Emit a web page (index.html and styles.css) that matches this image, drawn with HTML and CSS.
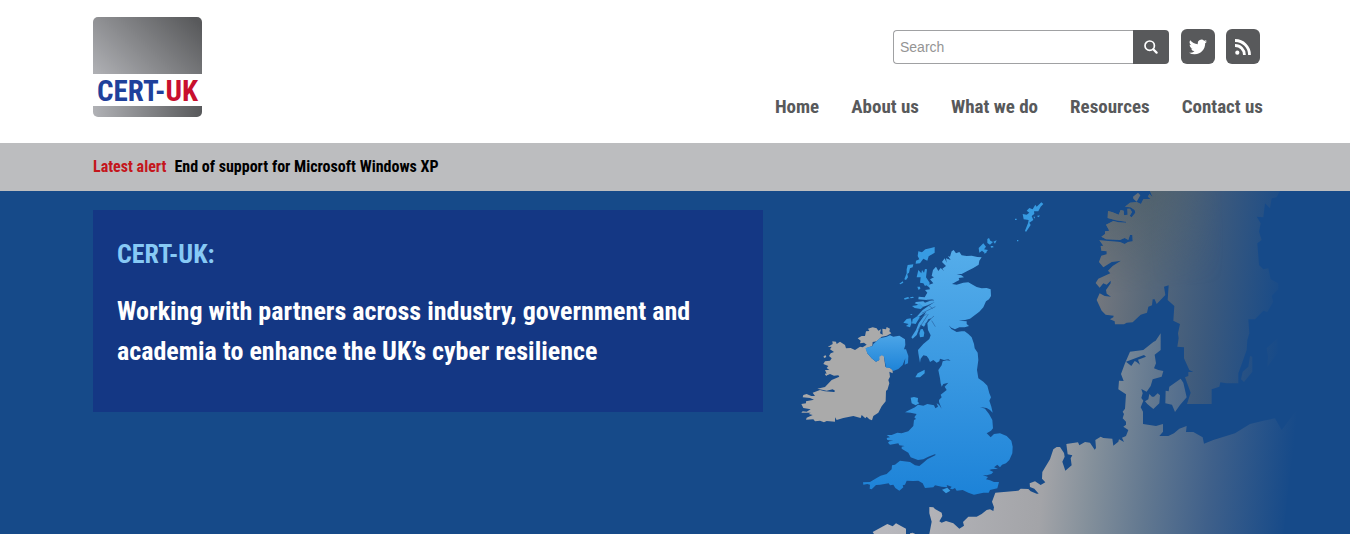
FILE: index.html
```html
<!DOCTYPE html>
<html lang="en">
<head>
    <meta charset="UTF-8">
    <meta name="viewport" content="width=device-width, initial-scale=1.0">
    <title>CERT-UK</title>
    <link rel="stylesheet" href="styles.css">
</head>
<body>
    <header class="container header">
        <a href="#" class="logo"><span class="logo-text">CERT-<span class="logo-uk">UK</span></span></a>

        <div class="header-right">
            <div class="tools">
                <form class="search">
                    <input type="text" placeholder="Search" aria-label="Search">
                    <button type="submit" aria-label="Search">
                        <svg width="14" height="14" viewBox="0 0 14 14" fill="none" stroke="#fff">
                            <circle cx="5.7" cy="5.7" r="4.7" stroke-width="1.7"/>
                            <path d="M9.2 9.2l3.4 3.4" stroke-width="2.2" stroke-linecap="round"/>
                        </svg>
                    </button>
                </form>
                <a href="#" class="social" aria-label="Twitter">
                    <svg width="18" height="18" viewBox="0 0 24 24" fill="#fff"><path d="M23.95 4.57a10 10 0 0 1-2.82.77 4.96 4.96 0 0 0 2.16-2.72c-.95.55-2 .95-3.13 1.18a4.92 4.92 0 0 0-8.38 4.48C7.69 8.1 4.07 6.13 1.64 3.16a4.93 4.93 0 0 0 1.52 6.57 4.9 4.9 0 0 1-2.23-.61v.06c0 2.38 1.7 4.37 3.95 4.82a5 5 0 0 1-2.21.09 4.94 4.94 0 0 0 4.6 3.42A9.87 9.87 0 0 1 0 19.54a13.94 13.94 0 0 0 7.55 2.21c9.05 0 14-7.5 14-13.99 0-.21 0-.42-.02-.63a9.94 9.94 0 0 0 2.42-2.56z"/></svg>
                </a>
                <a href="#" class="social" aria-label="RSS">
                    <svg width="16" height="16" viewBox="0 0 16 16" fill="none" stroke="#fff" stroke-width="2.8">
                        <circle cx="2.3" cy="13.7" r="2.1" fill="#fff" stroke="none"/>
                        <path d="M0 6.5A9.3 9.3 0 0 1 9.4 16M0 1.5A14.3 14.3 0 0 1 14.5 16"/>
                    </svg>
                </a>
            </div>
            <nav class="nav">
                <a href="#">Home</a>
                <a href="#">About us</a>
                <a href="#">What we do</a>
                <a href="#">Resources</a>
                <a href="#">Contact us</a>
            </nav>
        </div>
    </header>

    <div class="alert">
        <div class="container alert-inner">
            <span class="alert-label">Latest alert</span>
            <a href="#">End of support for Microsoft Windows XP</a>
        </div>
    </div>

    <main class="hero">
        <svg class="map" viewBox="0 3 1680 1029" aria-hidden="true">
            <defs>
                <linearGradient id="gb" x1="0" y1="0" x2="0" y2="1">
                    <stop offset="0" stop-color="#55adea"/>
                    <stop offset="1" stop-color="#1d83d8"/>
                </linearGradient>
                <linearGradient id="ni" x1="0" y1="0" x2="0" y2="1">
                    <stop offset="0" stop-color="#4ca5e7"/>
                    <stop offset="1" stop-color="#1d83d8"/>
                </linearGradient>
                <linearGradient id="europe" gradientUnits="userSpaceOnUse" x1="300" y1="900" x2="1490" y2="1010">
                    <stop offset="0" stop-color="#b8b8bd"/>
                    <stop offset=".38" stop-color="#a3a4a8"/>
                    <stop offset=".5" stop-color="#84909b"/>
                    <stop offset=".64" stop-color="#627890"/>
                    <stop offset=".8" stop-color="#3f608a"/>
                    <stop offset="1" stop-color="#164a89"/>
                </linearGradient>
                <linearGradient id="nordic" gradientUnits="userSpaceOnUse" x1="920" y1="340" x2="1480" y2="400">
                    <stop offset="0" stop-color="#73777e"/>
                    <stop offset=".25" stop-color="#59697a"/>
                    <stop offset=".6" stop-color="#3b597d"/>
                    <stop offset="1" stop-color="#164a89"/>
                </linearGradient>
                <linearGradient id="shade" gradientUnits="userSpaceOnUse" x1="1050" y1="0" x2="1080" y2="300">
                    <stop offset="0" stop-color="#4c5e68" stop-opacity=".7"/>
                    <stop offset="1" stop-color="#4c5e68" stop-opacity="0"/>
                </linearGradient>
                <linearGradient id="shade-fade" gradientUnits="userSpaceOnUse" x1="1080" y1="0" x2="1300" y2="0">
                    <stop offset="0" stop-color="#fff"/>
                    <stop offset="1" stop-color="#000"/>
                </linearGradient>
                <mask id="fade"><path fill="url(#shade-fade)" d="M900 0h600v400H900z"/></mask>
                <path id="norway" d="M1080 3L1088 22 1078 12 1074 20 1082 27 1060 28 1053 42 1040 36 1020 38 1005 50 1022 52 1034 60 1036 68 1025 82 1019 78 1026 66 1020 56 1012 56 1013 74 1002 76 1001 62 992 60 986 74 975 70 968 67 954 63 953 84 978 91 1008 95 1008 98 985 97 970 93 948 104 958 122 945 124 945 132 934 140 948 148 990 150 1004 144 1015 150 1020 135 1027 135 1028 154 1014 156 1004 162 990 156 928 151 940 167 932 168 934 182 950 184 950 193 934 197 927 216 940 232 965 216 993 212 968 228 954 242 961 250 925 266 917 279 929 293 940 280 950 284 962 272 962 280 948 300 950 311 963 320 944 318 929 310 920 330 935 362 947 374 971 377 970 382 960 388 974 394 975 403 1002 403 1010 398 1028 397 1052 374 1071 368 1075 350 1086 346 1088 328 1094 328 1100 342 1126 315 1122 290 1136 286 1133 330 1153 348 1150 392 1170 402 1164 430 1166 445 1162 470 1182 472 1182 505 1198 540 1210 546 1195 546 1195 558 1185 562 1202 608 1191 642 1265 642 1265 598 1288 590 1291 577 1310 580 1345 580 1345 550 1356 520 1370 480 1372 450 1378 430 1375 388 1395 388 1420 362 1432 366 1450 335 1445 318 1465 298 1465 280 1442 268 1435 235 1420 238 1407 225 1402 160 1415 150 1407 125 1412 100 1400 80 1420 82 1425 40 1440 55 1445 25 1460 22 1470 3z"/>
            </defs>

            <!-- Scandinavia -->
            <use href="#norway" fill="url(#nordic)"/>
            <use href="#norway" fill="url(#shade)" mask="url(#fade)"/>
            <path fill="url(#nordic)" d="M1029 20L1044 8 1051 16 1040 35 1030 26zM1380 498L1387 500 1387 545 1362 576 1353 568 1358 545 1375 530zM1430 475L1462 445 1463 490 1432 530 1434 500z"/>

            <!-- mainland Europe and Denmark -->
            <g fill="url(#europe)">
                <path d="M418 1032L425 995 418 970 418 951 430 952 435 957 455 968 457 978 448 994 455 998 468 993 490 1000 508 1016 522 1007 519 996 535 980 560 980 575 972 590 960 600 958 610 963 612 952 606 935 616 908 685 902 692 896 715 897 722 904 740 911 746 911 733 896 720 891 719 880 735 874 752 885 766 877 756 866 757 846 780 808 790 778 800 771 810 771 822 789 824 800 817 815 826 842 845 826 842 805 847 796 833 793 829 762 864 757 868 766 885 756 900 758 914 779 918 774 916 750 932 740 940 744 967 746 970 767 985 755 987 748 1002 756 996 743 1008 738 1015 720 1000 710 1008 704 1008 695 998 685 1002 672 998 665 1005 656 1008 613 985 598 987 572 1001 573 993 552 1005 520 1020 485 1060 480 1090 456 1097 452 1112 430 1112 480 1094 494 1098 520 1092 535 1105 540 1120 543 1115 560 1088 568 1082 588 1070 605 1054 597 1058 610 1054 624 1060 632 1052 652 1059 665 1059 702 1098 708 1119 702 1119 725 1108 738 1135 738 1152 730 1168 716 1190 708 1188 726 1210 726 1238 742 1242 761 1270 750 1335 730 1380 702 1420 692 1455 685 1475 720 1535 640 1500 850 1480 1032z"/>
                <path d="M248 1026L292 1002 308 1009 318 1000 348 1016 348 1032 252 1032zM360 1030L368 1028 376 1032H360zM1065 634L1075 628 1078 612 1086 620 1092 620 1103 610 1110 616 1108 640 1090 657 1072 642zM1127 602L1136 604 1138 590 1172 566 1180 578 1190 622 1170 645 1155 666 1146 644 1126 640z"/>
            </g>
            <path fill="#164a89" d="M1008 515L1062 495 1068 500 1044 509 1050 524 1040 516 1034 513 1024 528z"/>

            <!-- Ireland -->
            <path fill="#aaa" d="M203 445L215 438 225 438 228 424 238 423 234 416 248 412 260 415 265 422 273 418 270 430 278 434 277 416 288 418 290 411 300 416 298 424 304 430 290 437 275 440 260 454 248 456 247 468 228 475 232 490 245 505 258 515 268 510 274 496 282 500 286 530 299 533 308 540 308 550 298 545 300 560 295 570 298 580 292 600 288 602 287 634 275 649 265 668 250 678 246 691 238 688 230 680 226 685 215 675 212 684 190 678 160 684 140 690 135 682 135 695 110 693 102 697 90 692 75 694 70 688 48 689 50 683 68 675 56 672 62 668 34 668 38 664 50 665 62 658 40 654 34 642 48 640 48 634 72 629 60 624 38 622 40 615 50 612 64 618 75 618 68 608 90 600 105 604 132 606 136 603 128 598 110 602 82 596 105 591 125 570 148 560 145 556 132 557 120 552 112 556 105 540 118 540 110 534 115 528 100 522 105 514 120 512 125 505 117 498 122 490 132 486 120 478 125 470 113 471 128 462 127 454 138 455 140 462 150 455 165 465 168 475 182 474 195 480 210 470 218 472 230 464 222 458 210 460 212 452zM100 500l6-5 3 6-6 3zM107 550l5 3-2 5-5-4z"/>
            <path fill="url(#ni)" d="M226 474L248 468 250 462 270 445 290 440 300 436 310 440 328 437 345 448 346 465 342 478 348 478 355 498 354 520 344 524 346 505 338 525 325 537 310 543 300 533 288 533 282 500 274 496 268 510 258 515 245 505 232 490z"/>
            <path fill="#aaa" d="M268 500l8-4 6 4-1 12-12 2z"/>

            <!-- Great Britain -->
            <path fill="url(#gb)" d="M491 180L498 190 508 186 515 196 530 198 545 197 562 201 575 202 568 212 566 224 550 234 532 243 515 252 500 252 514 256 522 262 506 264 508 270 498 275 486 282 500 284 520 278 535 277 548 284 560 291 575 295 590 294 602 298 603 318 597 328 588 334 580 352 568 365 552 377 540 386 525 390 506 392 530 394 530 402 537 408 524 412 508 412 495 418 484 413 476 406 484 417 500 426 515 424 524 424 535 432 545 442 552 462 554 475 563 488 565 510 561 540 565 565 580 575 592 587 598 610 603 622 598 632 604 650 608 668 600 660 590 654 570 651 585 656 597 672 607 690 609 715 603 722 590 730 602 742 612 732 630 730 650 738 664 752 668 770 667 790 658 810 648 820 636 824 630 832 622 824 612 832 624 836 605 838 598 840 610 846 604 852 590 856 578 855 594 861 588 868 600 871 612 876 627 876 622 895 600 900 596 908 580 908 552 914 535 908 518 900 500 902 495 894 488 898 480 896 485 890 470 885 472 892 455 890 435 886 430 892 405 894 398 880 385 872 370 873 350 872 345 884 338 886 340 892 328 902 316 894 310 884 300 886 296 880 270 884 258 885 245 898 239 896 240 884 232 882 220 884 219 877 240 876 260 864 272 857 290 852 305 838 306 826 315 824 330 812 360 816 375 826 388 828 400 818 412 808 436 796 436 792 415 800 400 808 384 810 362 802 355 788 335 776 335 770 344 768 328 766 325 760 300 764 294 758 298 754 310 752 292 750 290 744 300 742 290 735 305 735 322 728 335 730 355 724 370 708 372 690 378 687 373 682 380 672 362 668 345 667 358 660 375 652 384 644 400 647 412 642 432 646 436 655 444 650 440 640 447 644 455 656 447 636 447 630 455 622 452 614 470 600 464 590 475 578 460 582 455 590 452 580 450 565 445 540 455 526 458 514 470 511 482 512 475 508 462 510 450 506 448 514 440 518 430 510 420 516 416 506 410 498 400 496 392 506 390 518 385 490 384 480 400 462 418 447 422 436 414 420 412 400 424 385 415 388 402 410 392 404 380 435 368 446 364 442 378 420 386 400 400 380 408 365 390 378 382 378 398 360 412 350 435 335 415 345 400 350 392 346 374 340 378 336 400 334 405 338 432 328 410 330 385 328 386 320 404 322 412 308 405 300 420 298 415 285 430 280 420 268 432 262 425 258 429 240 438 230 445 243 452 234 463 244 457 236 468 228 456 216 464 205 470 218 468 205 482 210 474 198 480 200 485 184z"/>
            <path fill="none" stroke="#2b65a5" stroke-width="2" d="M366 401L410 372M384 420L415 372M405 402L432 378M425 392L436 410M395 370L436 350M410 330L432 332M415 345L428 356"/>

            <!-- islands -->
            <g fill="#379be2">
                <path d="M434 171L434 188 416 199 412 212 400 206 390 220 377 221 378 212 388 208 383 198 385 184 396 187 406 178 420 175zM353 225L370 223 368 232 360 235 357 248 352 252 354 262 348 270 343 268 350 250 350 238zM328 281l10-7 2 4-9 5z"/>
                <path d="M385 240L394 250 396 240 402 248 405 237 411 238 408 262 419 278 417 292 409 286 405 288 400 280 390 278 392 262 380 262zM382 290l8 0 1 7-6 2zM342 325l12-4 5 4-15 4zM360 322l9-2 3 3-10 2zM366 348L380 346 388 340 400 350 392 357 374 354zM361 372l7 0-5 4z"/>
                <path d="M340 398L350 387 362 385 365 398 360 412 348 408 356 402zM368 388L384 377 390 380 377 402 366 400zM392 418L398 417 403 428 401 440 390 442 388 430zM376 562L383 550 404 539 404 550 390 562zM362 623L372 621 384 624 383 635 388 640 377 646 365 640zM456 899L472 893 481 902 468 910z"/>
                <path d="M566 174L580 160 588 170 582 178 594 180 585 190 576 182 568 188zM592 147l5-3 4 8 8 4-9 8-8-5zM610 155l10-4-5 10zM602 168l7 0 2 4-8 1zM585 182l6 4-8 6z"/>
                <path d="M754 37L760 42 752 50 745 64 732 64 733 72 725 78 730 90 718 98 722 105 708 126 705 122 714 100 716 90 701 88 698 72 710 74 718 68 710 62 718 54 728 58 736 44 740 50zM675 86h5v4h-5zM681 150h4v4h-4zM740 78l9-2-2 6zM730 80l5 0-1 6z"/>
            </g>
        </svg>

        <div class="container">
            <section class="intro">
                <h1>CERT-UK:</h1>
                <p>Working with partners across industry, government and academia to enhance the UK’s cyber resilience</p>
            </section>
        </div>
    </main>
</body>
</html>
```
FILE: styles.css
```css
*{
    box-sizing: border-box;
}
body{
    margin: 0;
    background-color: white;
    font-family: "Roboto Condensed", Roboto, "Liberation Sans", sans-serif;
    font-weight: bold;
}
a{
    color: inherit;
    text-decoration: none;
}
.container{
    max-width: 1176px;
    margin: 0 auto;
    padding-left: 6px;
}
.header{
    display: flex;
    justify-content: space-between;
    padding-top: 17px;
    padding-bottom: 23px;
}
.logo{
    width: 109px;
    height: 100px;
    padding-top: 57px;
    border-radius: 5px;
    background: linear-gradient(45deg, #b0b1b5, #58595b 95%) top / 100% 57px no-repeat,
                linear-gradient(90deg, #b0b1b5, #58595b) bottom / 100% 11px no-repeat;
}
.logo-text{
    display: block;
    height: 32px;
    line-height: 34px;
    font-size: 29px;
    text-align: center;
    white-space: nowrap;
    color: #1f419b;
    background-color: white;
}
.logo-uk{
    color: #c8102e;
}
.header-right{
    display: flex;
    flex-direction: column;
    align-items: flex-end;
    padding-top: 12px;
}
.tools{
    display: flex;
    align-items: center;
    margin-right: 3px;
}
.search{
    display: flex;
    margin-right: 1px;
}
.search input{
    width: 240px;
    height: 34px;
    padding: 0 6px;
    border: 1px solid #a0a1a3;
    border-right: 0;
    border-radius: 4px 0 0 4px;
    font-family: "Liberation Sans", Arial, sans-serif;
    font-size: 14px;
}
.search input::placeholder{
    color: #949494;
}
.search button{
    display: flex;
    align-items: center;
    justify-content: center;
    width: 36px;
    height: 34px;
    padding: 0;
    border: 0;
    border-radius: 0 4px 4px 0;
    background-color: #58595b;
}
.social{
    display: flex;
    align-items: center;
    justify-content: center;
    width: 34px;
    height: 35px;
    margin-left: 11px;
    border-radius: 6px;
    background-color: #58595b;
}
.nav{
    display: flex;
    gap: 32px;
    margin-top: 30px;
    font-size: 19px;
    line-height: 26px;
    color: #58595b;
}
.alert{
    background-color: #bcbdbf;
}
.alert-inner{
    display: flex;
    gap: 8px;
    font-size: 16px;
    line-height: 48px;
    color: black;
}
.alert-label{
    color: #c4161c;
}
.hero{
    position: relative;
    min-height: 343px;
    padding-top: 19px;
    background-color: #164a89;
    overflow: hidden;
}
.map{
    position: absolute;
    top: 0;
    right: 0;
    width: 560px;
    height: 343px;
}
.intro{
    position: relative;
    max-width: 670px;
    min-height: 202px;
    padding: 24px;
    background-color: #143784;
    font-size: 26px;
    line-height: 40px;
    color: white;
}
.intro h1{
    margin: 0 0 17px;
    font-size: 26px;
    color: #87c9f5;
}
.intro p{
    margin: 0;
}
```
